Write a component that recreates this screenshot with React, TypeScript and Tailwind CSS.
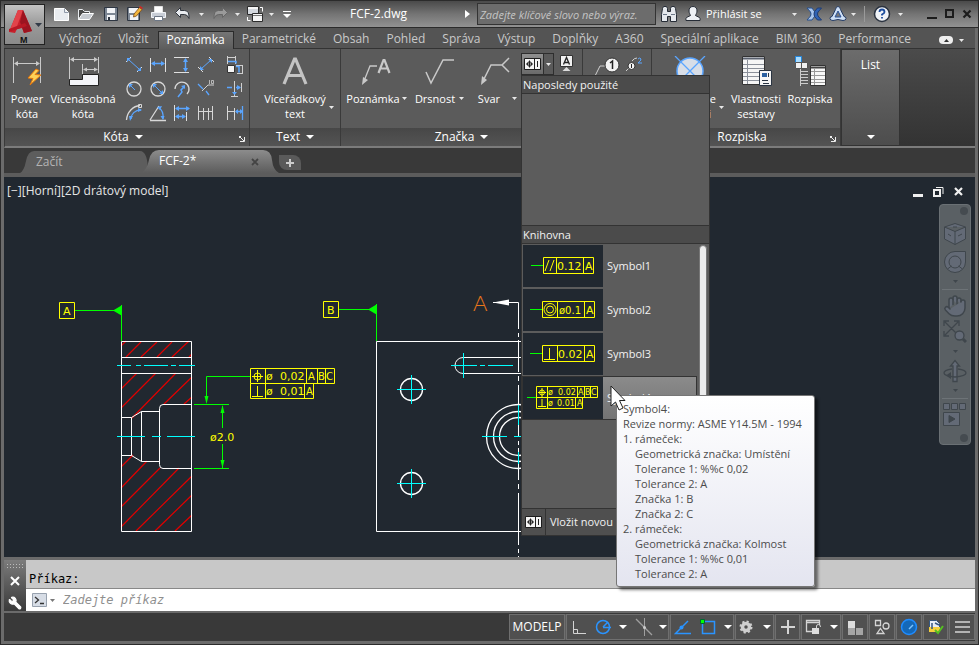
import type { ReactNode } from "react";
import { Hand, Wrench } from "lucide-react";

const tabs = [
  "Výchozí",
  "Vložit",
  "Poznámka",
  "Parametrické",
  "Obsah",
  "Pohled",
  "Správa",
  "Výstup",
  "Doplňky",
  "A360",
  "Speciální aplikace",
  "BIM 360",
  "Performance",
];

const tooltipLines = [
  { text: "Symbol4:", indent: false },
  { text: "Revize normy: ASME Y14.5M - 1994", indent: false },
  { text: "1. rámeček:", indent: false },
  { text: "Geometrická značka: Umístění", indent: true },
  { text: "Tolerance 1: %%c 0,02", indent: true },
  { text: "Tolerance 2: A", indent: true },
  { text: "Značka 1: B", indent: true },
  { text: "Značka 2: C", indent: true },
  { text: "2. rámeček:", indent: false },
  { text: "Geometrická značka: Kolmost", indent: true },
  { text: "Tolerance 1: %%c 0,01", indent: true },
  { text: "Tolerance 2: A", indent: true },
];

type IconProps = { w?: number; h?: number; children: ReactNode };

function Icon({ w = 18, h = 18, children }: IconProps) {
  return (
    <svg
      width={w}
      height={h}
      viewBox={`0 0 ${w} ${h}`}
      fill="none"
      stroke="#d4d4d4"
      className="block flex-none"
      aria-hidden="true"
    >
      {children}
    </svg>
  );
}

function Caret({ big }: { big?: boolean }) {
  return big ? (
    <svg width="8" height="4" viewBox="0 0 8 4" className="block flex-none" aria-hidden="true">
      <path d="M0 0h8L4 4z" fill="#fff" />
    </svg>
  ) : (
    <svg width="5" height="3" viewBox="0 0 5 3" className="block flex-none" aria-hidden="true">
      <path d="M0 0h5L2.5 3z" fill="#e8e8e8" />
    </svg>
  );
}

/* ---------- title bar ---------- */

function Logo() {
  return (
    <button
      aria-label="Nabídka aplikace"
      className="absolute left-[3px] top-[3px] z-10 h-[41px] w-[41px] border border-[#222] bg-linear-to-b from-[#c4c4c4] via-[#9a9a9a] to-[#8a8a8a]"
    >
      <svg width="39" height="39" viewBox="0 0 39 39" aria-hidden="true">
        <path d="M13 5h5l9 21-8 2-2-5-5 1-2 4-6-1z" fill="#c8202c" />
        <path d="M13 5h5l-7 19-7 3z" fill="#e2434a" />
        <path d="M18 5l9 21-8 2-4-11z" fill="#9c1420" />
        <path d="M4 24l16-6 2 3-18 6z" fill="#b81824" />
        <path d="M30 18h7l-3.500 4z" fill="#333b48" />
        <text x="15" y="38" fontSize="9" fontWeight="700" fontFamily="Liberation Sans" fill="#111">
          M
        </text>
      </svg>
    </button>
  );
}

function QuickAccess() {
  return (
    <div className="flex items-center">
      <button aria-label="Nový" className="w-6">
        <Icon>
          <path d="M1.500 3.500h10l4 4v8h-14z" fill="#e9ecf0" stroke="#fff" />
          <path d="M11.500 3.500v4h4" stroke="#8f99a8" />
        </Icon>
      </button>
      <button aria-label="Otevřít" className="w-[25px]">
        <Icon>
          <path d="M1.500 14.500v-10h4l2 2h5v3" fill="#4a4a4a" stroke="#e9ecf0" />
          <path d="M1.500 14.500l4-6h11l-4 6z" fill="#c7cbd1" stroke="#fff" />
        </Icon>
      </button>
      <button aria-label="Uložit" className="w-[23px]">
        <Icon>
          <path d="M2.500 2.500h13v13h-13z" fill="#7d8794" stroke="#2e3642" />
          <path d="M5 3h8v5H5zM5 10h8v5H5z" fill="#f2f4f7" stroke="none" />
          <path d="M6 12h2v3H6z" fill="#2e3642" stroke="none" />
        </Icon>
      </button>
      <button aria-label="Uložit jako" className="w-[25px]">
        <Icon>
          <path d="M2.500 2.500h12v13h-12z" fill="#7d8794" stroke="#2e3642" />
          <path d="M4 3h9v5H4zM5 10h8v5H5z" fill="#f2f4f7" stroke="none" />
          <path d="M9 9l5.500-6.500 2.500 2L11.500 11l-3 1z" fill="#f3b63c" stroke="#7a4a18" strokeWidth=".8" />
          <path d="M14 2l1-1 3 2-1 1z" fill="#d22" stroke="none" />
        </Icon>
      </button>
      <button aria-label="Tisk" className="w-6">
        <Icon>
          <path d="M4.500 7V1.500h8V7" fill="#fff" stroke="#e0e0e0" />
          <path d="M1.500 7.500h14v5h-14z" fill="#c9ced6" stroke="#f2f4f7" />
          <path d="M4.500 11.500h8v4h-8z" fill="#fff" stroke="#6c7685" />
        </Icon>
      </button>
      <button aria-label="Zpět" className="w-[18px]">
        <Icon>
          <path d="M1.500 7.500l5-5v3h4q5 0 4.500 8-1.500-4-4.500-4h-4v3z" fill="#e9ecf0" stroke="#30363f" />
        </Icon>
      </button>
      <button aria-label="Historie zpět" className="flex w-[19px] justify-center">
        <Caret />
      </button>
      <button aria-label="Znovu" className="w-[18px]">
        <Icon>
          <path d="M16.500 7.500l-5-5v3h-4q-5 0-4.500 8 1.500-4 4.500-4h4v3z" fill="#9a9a9a" stroke="#666" />
        </Icon>
      </button>
      <button aria-label="Historie znovu" className="flex w-[17px] justify-center">
        <Caret />
      </button>
      <button aria-label="Pracovní prostory" className="w-[18px]">
        <Icon>
          <path d="M1.500 1.500h11v8h-11z" fill="#d4d8de" stroke="#2c2c2c" />
          <path d="M2 2h10v2H2z" fill="#f5f5f5" stroke="none" />
          <path d="M6.500 8.500h10v8h-10z" fill="#f5f5f5" stroke="#2c2c2c" />
          <path d="M7 10.500h9" stroke="#777" />
          <path d="M14 2.500h2.500v4M1.500 12v3.500h3" stroke="#fff" />
        </Icon>
      </button>
      <button aria-label="Vybrat prostor" className="flex w-[15px] justify-center">
        <Caret />
      </button>
      <button aria-label="Přizpůsobit panel" className="flex w-4 flex-col items-center gap-0.5">
        <span className="h-px w-2 bg-white" />
        <Caret big />
      </button>
    </div>
  );
}

function TitleBar() {
  return (
    <header className="flex h-[27px] items-center border-b border-[#2b2b2b] bg-linear-to-b from-[#4a4a4a] via-[#747474] to-[#929292] pl-[52px] pr-1.5">
      <QuickAccess />
      <h1 className="ml-[55px] w-[115px] flex-none text-xs leading-4 text-white">FCF-2.dwg</h1>
      <svg width="5" height="8" viewBox="0 0 5 8" className="mr-[7px] flex-none" aria-hidden="true">
        <path d="M0 0l5 4-5 4z" fill="#fff" />
      </svg>
      <input
        aria-label="Hledat"
        placeholder="Zadejte klíčové slovo nebo výraz."
        className="h-[22px] min-w-0 flex-1 border border-[#333] bg-[#6c6c6c] px-0.5 text-[11px] italic placeholder:text-[#c4c4c4]"
      />
      <button aria-label="Hledat" className="ml-1 w-6">
        <Icon>
          <path
            d="M2.500 3.500l1-2h3l1 2v3h3v-3l1-2h3l1 2 1 6v7h-6v-5h-3v5h-6v-7z"
            fill="#e6e9ee"
            stroke="#262c36"
          />
          <path d="M3 9.500h4M11 9.500h4" stroke="#6b7686" />
        </Icon>
      </button>
      <button className="flex items-center gap-1 text-[11px] leading-4 text-white">
        <Icon>
          <path
            d="M9 1.500c3 0 4 2 4 4.500 0 2-1 3-1.500 4.500l4 2q1 1 .5 3H2q-.5-2 .5-3l4-2C6 9 5 8 5 6c0-2.500 1-4.500 4-4.500z"
            fill="#eef1f5"
            stroke="#262c36"
          />
        </Icon>
        <span className="w-[82px] text-left">Přihlásit se</span>
        <Caret />
      </button>
      <button aria-label="Exchange" className="ml-2 w-6">
        <Icon>
          <path d="M2 3h5l2.500 3.500q1 2.500 0 5L7 15H2l3.500-4q1-2 0-4z" fill="#a9c6ee" stroke="#27508f" />
          <path d="M16.500 3h-4L9.500 6.500q-1 2.500 0 5l3 3.500h4L13 11q-1-2 0-4z" fill="#2f62b4" stroke="#1f3c74" />
        </Icon>
      </button>
      <button aria-label="A360" className="flex items-center gap-1">
        <Icon>
          <path
            d="M9 1.500q2 0 2.500 3l3.500 7q2 0 2 2t-3 2l-5-1-5 1q-3 0-3-2t2-2l3.500-7q.5-3 2.500-3z"
            fill="#cfe0f6"
            stroke="#233a63"
          />
          <path d="M9 6l3 6H6z" fill="#777" stroke="#2a5298" />
        </Icon>
        <Caret />
      </button>
      <span className="ml-2 h-4 w-px bg-[#9a9a9a]" />
      <button aria-label="Nápověda" className="ml-2 flex items-center gap-[7px]">
        <Icon>
          <circle cx="9" cy="9" r="7.500" fill="#f0f3f8" stroke="#2b3340" strokeWidth="1.500" />
          <path d="M6.500 7q0-2.500 2.500-2.500T11.500 7q0 1.200-2.500 2.500v1M9 12v1.500" stroke="#1d4d9e" strokeWidth="1.800" />
        </Icon>
        <Caret />
      </button>
      <div className="ml-6 flex gap-2 text-[#1c1c1c]">
        <button aria-label="Minimalizovat" className="flex h-2.5 w-2.5 items-end">
          <span className="h-[2px] w-full bg-current" />
        </button>
        <button aria-label="Maximalizovat" className="h-[9px] w-[9px] border-2 border-current" />
        <button aria-label="Zavřít">
          <svg width="10" height="10" viewBox="0 0 10 10" aria-hidden="true">
            <path d="M1.500 1.500l7 7M8.500 1.500l-7 7" stroke="currentColor" strokeWidth="2.200" />
          </svg>
        </button>
      </div>
    </header>
  );
}

function RibbonTabs() {
  return (
    <nav className="flex h-[21px] items-end border-b border-[#333] bg-[#545454] pl-[47px]">
      {tabs.map((tab) => (
        <a
          key={tab}
          href="#"
          className={
            tab === "Poznámka"
              ? "-mb-px h-[18px] flex-none border border-b-0 border-[#2b2b2b] bg-linear-to-b from-[#757575] to-[#5d5d5d] px-2 text-xs leading-4 text-white"
              : "h-[17px] flex-none pl-2 pr-[9px] text-xs leading-4 text-[#c9c9c9]"
          }
        >
          {tab}
        </a>
      ))}
      <button aria-label="Minimalizovat pás karet" className="mb-1 ml-auto mr-[11px] flex items-center gap-1.5">
        <span className="flex h-2 w-[14px] items-center justify-center rounded-sm bg-[#eee]">
          <svg width="5" height="3" viewBox="0 0 5 3" aria-hidden="true">
            <path d="M0 3h5L2.500 0z" fill="#333" />
          </svg>
        </span>
        <Caret />
      </button>
    </nav>
  );
}

/* ---------- ribbon ---------- */

const blue = "#5aa5ff";

function PowerDimIcon() {
  return (
    <Icon w={32} h={32}>
      <path d="M2.500 1v26M29.500 1v26M4 7.500h24" stroke="#c9c9c9" />
      <path d="M3 7.500l4-2.500v5zM29 7.500L25 5v5z" fill="#c9c9c9" stroke="none" />
      <path d="M25 13l-8 9 5 .5-3 6.500 11-10-6-.5 4-4z" fill="#ffd257" stroke="#e8790b" />
    </Icon>
  );
}

function MultiDimIcon() {
  return (
    <Icon w={32} h={32}>
      <path d="M2.500 1v22M31.500 1v16M4 3.500h26M15.500 8v10M17 13.500h13" stroke="#c9c9c9" />
      <path d="M3 3.500L7 1v5zM31 3.500L27 1v5zM16 13.500l4-2v4zM31 13.500l-4-2v4z" fill="#c9c9c9" stroke="none" />
      <path d="M2.500 29.500v-6h13v-5h16v11z" fill="#f3f4f8" stroke="#222" />
    </Icon>
  );
}

const smallDims: ReactNode[] = [
  <>
    <path d="M1 6l5-5M12 16l5-5" stroke="#e0e0e0" />
    <path d="M4 4l10 9" stroke={blue} />
    <path d="M2 2h4L2 6zM16 15h-4l4-4z" fill={blue} stroke="none" />
  </>,
  <>
    <path d="M1.500 2v14M16.500 2v14" stroke="#e0e0e0" />
    <path d="M3 7.500h12" stroke={blue} strokeWidth="1.500" />
    <path d="M2 7.500L6 5v5zM16 7.500L12 5v5z" fill={blue} stroke="none" />
  </>,
  <>
    <path d="M1 1.500h15M1 16.500h15" stroke="#e0e0e0" />
    <path d="M12.500 3v12" stroke={blue} strokeWidth="1.500" />
    <path d="M12.500 2L10 6h5zM12.500 16L10 12h5z" fill={blue} stroke="none" />
  </>,
  <>
    <path d="M12 1l5 5M1 11l5 5" stroke="#e0e0e0" />
    <path d="M4 13L14 4" stroke={blue} />
    <path d="M15 3v4l-4-4zM3 14v-4l4 4z" fill={blue} stroke="none" />
  </>,
  <>
    <path d="M1.500 0v8M9.500 0v8M1 1.500h9M10 9.500h7M11 17.500h6M16.500 9v9" stroke="#d0d0d0" />
    <path d="M2 5.500h8v2M10 10.500h3v6" stroke={blue} strokeWidth="1.500" />
    <path d="M1.500 9.500h7v7h-7z" fill="#f5f5f5" stroke="#333" />
  </>,
  <>
    <circle cx="9" cy="9" r="7" stroke="#d8d8d8" strokeWidth="1.300" />
    <path d="M5 5l5 5" stroke={blue} />
    <path d="M4 4h4L4 8z" fill={blue} stroke="none" />
  </>,
  <>
    <circle cx="9" cy="9" r="7" stroke="#d8d8d8" strokeWidth="1.300" />
    <path d="M5 5l8 8" stroke={blue} />
    <path d="M4 4h4L4 8zM14 14h-4l4-4z" fill={blue} stroke="none" />
  </>,
  <>
    <path d="M2 9a7 7 0 1 1 12 5" stroke="#d8d8d8" strokeWidth="1.300" />
    <path d="M5 17l4-5-1-2 3-3" stroke={blue} strokeWidth="1.500" />
    <path d="M12 5v4L8 6z" fill={blue} stroke="none" />
  </>,
  <>
    <path d="M1 4l5 5M12 15l-3-4" stroke={blue} strokeWidth="1.300" />
    <path d="M5 11l6-6h6" stroke="#d0d0d0" />
    <path d="M12.500 0v4M14.500.5h2v3h-2z" stroke="#d0d0d0" strokeWidth=".8" />
  </>,
  <>
    <path d="M8.500 1v15M5 16.500h7M15.500 3v9" stroke="#d0d0d0" />
    <path d="M1 7.500h5M10 7.500h4" stroke={blue} strokeWidth="1.300" />
    <path d="M15 7.500L11 5v5zM8.500 15L6 12h5z" fill={blue} stroke="none" />
  </>,
  <>
    <path d="M1.500 16C2 8 8 2 15 1.500" stroke="#d8d8d8" strokeWidth="1.300" />
    <path d="M6 15c0-5 4-9 10-9" stroke={blue} strokeWidth="1.300" />
    <path d="M5 17l-1-5h4zM17 6l-4-2v4z" fill={blue} stroke="none" />
    <path d="M13.500.5h3v3h-3z" stroke="#d8d8d8" />
  </>,
  <>
    <path d="M1 16.500h16M1 16L10 2" stroke="#d8d8d8" strokeWidth="1.300" />
    <path d="M10 4q5 3 4 11" stroke={blue} strokeWidth="1.300" />
    <path d="M8 3l5-1-2 4zM14 16l-2.500-4h4z" fill={blue} stroke="none" />
  </>,
  <>
    <path d="M1.500 1v16M13.500 8v9" stroke="#e0e0e0" />
    <path d="M3 4.500h13M3 12.500h9" stroke={blue} strokeWidth="1.500" />
    <path d="M2 4.500L6 2v5zM17 4.500L13 2v5zM2 12.500L6 10v5zM13 12.500L9 10v5z" fill={blue} stroke="none" />
  </>,
  <path d="M1.500 2v14M6.500 4v12M11.500 4v12M15.500 2v14M2 7.500h14" stroke="#d8d8d8" />,
  <>
    <path d="M1.500 2v14M8.500 4v12M2 7.500h7" stroke="#d8d8d8" />
    <path d="M10 7.500h6M16.500 2v14" stroke={blue} strokeWidth="1.300" />
    <path d="M9 7.500L12 5v5zM17 7.500L14 5v5z" fill={blue} stroke="none" />
  </>,
];

function BigButton({ icon, children, wide }: { icon: ReactNode; children: ReactNode; wide?: boolean }) {
  return (
    <button
      className={
        wide
          ? "flex w-[68px] flex-none flex-col items-center gap-[3px] whitespace-nowrap"
          : "flex w-11 flex-none flex-col items-center gap-[3px] whitespace-nowrap"
      }
    >
      {icon}
      <span className="text-center text-[11px] leading-[15px] text-white">{children}</span>
    </button>
  );
}

function PanelTitle({ children, launcher }: { children: ReactNode; launcher?: boolean }) {
  return (
    <div
      className={
        launcher
          ? "relative flex h-[18px] items-center justify-center gap-1.5 bg-linear-to-b from-[#474747] to-[#545454] pr-2 text-xs leading-4 text-white"
          : "flex h-[18px] items-center justify-center gap-1.5 bg-linear-to-b from-[#474747] to-[#545454] text-xs leading-4 text-white"
      }
    >
      {children}
      {launcher && (
        <button aria-label="Nastavení panelu" className="absolute bottom-1 right-1">
          <svg width="6" height="6" viewBox="0 0 6 6" aria-hidden="true">
            <path d="M0 .5h2M.5 0v2M1 1l4 4M5.500 1v4.500H1" stroke="#eee" fill="none" />
          </svg>
        </button>
      )}
    </div>
  );
}

function Frame() {
  return (
    <Icon w={17} h={12}>
      <path d="M.5.5h16v11H.5z" fill="#f5f5f5" stroke="#1d1d1d" />
      <path d="M10.500 1v10M13.500 3v6" stroke="#222" />
      <path d="M2 6h7M5.500 2.500v7" stroke="#222" />
      <circle cx="5.500" cy="6" r="2.200" stroke="#222" />
    </Icon>
  );
}

function Thumb({ kind }: { kind: number }) {
  return (
    <svg
      width="80"
      height="42"
      viewBox="0 0 80 42"
      fill="none"
      stroke="#ff0"
      fontFamily="DejaVu Sans"
      fontSize="11"
      className="block flex-none bg-[#212830]"
      aria-hidden="true"
    >
      {kind === 1 && (
        <>
          <path d="M8 20.500h12" stroke="#0f0" />
          <path d="M20.500 12.500h50v16h-50zM33.500 12v16M60.500 12v16M22 26l4-11M27 26l4-11" />
          <text x="34" y="25" fill="#ff0" stroke="none">0.12</text>
          <text x="62" y="25" fill="#ff0" stroke="none">A</text>
        </>
      )}
      {kind === 2 && (
        <>
          <path d="M7 20.500h12" stroke="#0f0" />
          <path d="M19.500 12.500h52v16h-52zM34.500 12v16M61.500 12v16" />
          <circle cx="27" cy="20.500" r="6" />
          <circle cx="27" cy="20.500" r="3.500" />
          <text x="36" y="25" fill="#ff0" stroke="none" fontSize="10">ø0.1</text>
          <text x="63" y="25" fill="#ff0" stroke="none">A</text>
        </>
      )}
      {kind === 3 && (
        <>
          <path d="M7 20.500h12" stroke="#0f0" />
          <path d="M19.500 12.500h52v16h-52zM34.500 12v16M61.500 12v16M21 26.500h11M26.500 15v11" />
          <text x="35" y="25" fill="#ff0" stroke="none">0.02</text>
          <text x="63" y="25" fill="#ff0" stroke="none">A</text>
        </>
      )}
      {kind === 4 && (
        <>
          <path d="M4 20.500h10" stroke="#0f0" />
          <path d="M13.500 9.500h61v11h-61zM13.500 20.500v11h46v-11M24.500 9v22M54.500 9v11M61.500 9v11M67.500 9v11M52.500 20v11M15 29.500h8M19 22v7M15 15.500h8M19 11v9" />
          <circle cx="19" cy="15.500" r="2.500" />
          <g fill="#ff0" stroke="none" fontSize="8">
            <text x="25" y="18">ø</text>
            <text x="35" y="18">0.02</text>
            <text x="55" y="18">A</text>
            <text x="62" y="18">B</text>
            <text x="68" y="18">C</text>
            <text x="25" y="29">ø</text>
            <text x="34" y="29">0.01</text>
            <text x="54" y="29">A</text>
          </g>
        </>
      )}
    </svg>
  );
}

function SymbolTooltip() {
  return (
    <div
      role="tooltip"
      className="absolute left-[93px] top-[18px] z-30 w-[199px] rounded-[3px] border border-[#767676] bg-linear-to-b from-white to-[#e4e5f0] px-1.5 py-[5px] shadow-[3px_3px_3px_rgba(0,0,0,0.5)]"
    >
      {tooltipLines.map((line, i) => (
        <p
          key={i}
          className={
            line.indent
              ? "whitespace-nowrap pl-3 text-[11px] leading-[15px] text-[#4c4c4c]"
              : "whitespace-nowrap text-[11px] leading-[15px] text-[#4c4c4c]"
          }
        >
          {line.text}
        </p>
      ))}
    </div>
  );
}

function SymbolMenu() {
  return (
    <div className="absolute left-0 top-full z-20 w-[189px] border border-[#333] bg-[#5c5c5c] text-[#f2f2f2]">
      <h2 className="h-[18px] border-b border-[#333] bg-[#4b4b4b] pl-px text-[11px] leading-[17px]">
        Naposledy použité
      </h2>
      <div className="h-[131px]" />
      <h2 className="h-[19px] border-y border-[#333] bg-[#4b4b4b] pl-px text-[11px] leading-[17px]">
        Knihovna
      </h2>
      <div className="flex h-[264px] pr-px pt-px">
        <ul className="flex-1 pl-px">
          {[1, 2, 3, 4].map((n) => (
            <li key={n} className="relative h-11 pr-[3px]">
              <button
                className={
                  n === 4
                    ? "flex h-[42px] w-full items-center bg-linear-to-b from-[#8b8b8b] to-[#747474] text-[11px] leading-4 outline outline-[#333]"
                    : "flex h-[42px] w-full items-center text-[11px] leading-4"
                }
              >
                <Thumb kind={n} />
                <span className="pl-1">Symbol{n}</span>
              </button>
              {n === 4 && (
                <>
                  <SymbolTooltip />
                  <svg
                    width="16"
                    height="26"
                    viewBox="0 0 16 26"
                    className="absolute left-[87px] top-2 z-40"
                    aria-hidden="true"
                  >
                    <path d="M1 1v20l4.500-4 3.500 8 4-2-3.500-7.500H15z" fill="#fff" stroke="#222" />
                  </svg>
                </>
              )}
            </li>
          ))}
        </ul>
        <div className="mr-px w-2 rounded-full border border-[#777] bg-[#ececec]" />
      </div>
      <button className="flex h-[27px] w-full items-center border-t border-[#333] bg-[#4f4f4f] text-[11px] leading-4">
        <span className="flex h-full w-6 items-center justify-center border-r border-[#333]">
          <Frame />
        </span>
        <span className="pl-1">Vložit novou</span>
      </button>
    </div>
  );
}

function Ribbon() {
  return (
    <section className="flex h-[99px] border-b-2 border-l border-b-[#7c7c7c] border-l-[#3a3a3a] bg-linear-to-b from-[#4b4b4b] to-[#333]">
      <div className="flex w-[245px] flex-none flex-col border-r border-[#3a3a3a] bg-[#5b5b5b]">
        <div className="flex flex-1 pt-[7px]">
          <BigButton icon={<PowerDimIcon />}>
            Power
            <br />
            kóta
          </BigButton>
          <BigButton wide icon={<MultiDimIcon />}>
            Vícenásobná
            <br />
            kóta
          </BigButton>
          <div className="ml-[5px] grid auto-rows-[24px] grid-cols-[24px_24px_24px_24px_29px] items-start">
            {smallDims.map((d, i) => (
              <button key={i} aria-label={`Kóta ${i + 1}`} className="flex justify-end pr-[3px]">
                <Icon>{d}</Icon>
              </button>
            ))}
          </div>
        </div>
        <PanelTitle launcher>
          Kóta <Caret big />
        </PanelTitle>
      </div>

      <div className="flex w-[91px] flex-none flex-col border-r border-[#3a3a3a] bg-[#5b5b5b]">
        <div className="flex flex-1 justify-center pt-[7px]">
          <button className="relative flex flex-col items-center gap-[3px] text-white">
            <Icon w={32} h={32}>
              <path d="M5 28L15.500 3h1L27 28M9 19.500h14" stroke="#c4c4c4" strokeWidth="3.200" />
            </Icon>
            <span className="text-center text-[11px] leading-[15px]">
              Víceřádkový
              <br />
              text
            </span>
            <span className="absolute -right-2 top-[50px]">
              <Caret />
            </span>
          </button>
        </div>
        <PanelTitle>
          Text <Caret big />
        </PanelTitle>
      </div>

      <div className="flex w-[242px] flex-none flex-col border-r border-[#3a3a3a] bg-[#5b5b5b]">
        <div className="flex flex-1 items-start">
          <button className="mt-[7px] flex w-[71px] flex-col items-center gap-[3px] text-[11px] leading-[15px] text-white">
            <Icon w={32} h={32}>
              <path d="M3 25l6-15h7" stroke="#c9c9c9" strokeWidth="1.300" />
              <path d="M1 29l1-8 5 3z" fill="#c9c9c9" stroke="none" />
              <path d="M17.500 17L22.500 4h1l5 13M19.500 12.500h7" stroke="#c9c9c9" strokeWidth="2.200" />
            </Icon>
            <span className="flex items-center gap-0.5">
              Poznámka <Caret />
            </span>
          </button>
          <button className="mt-[7px] flex w-[55px] flex-col items-center gap-[3px] text-[11px] leading-[15px] text-white">
            <Icon w={32} h={32}>
              <path d="M2 16l5 11L19 4h11" stroke="#c9c9c9" strokeWidth="1.500" />
            </Icon>
            <span className="flex items-center gap-1">
              Drsnost <Caret />
            </span>
          </button>
          <button className="mt-[7px] flex w-[54px] flex-col items-end gap-[3px] pr-1 text-[11px] leading-[15px] text-white">
            <span className="mr-1.5">
              <Icon w={32} h={32}>
                <path d="M4 25L12 9h11l7-7M23 9l7 7" stroke="#c9c9c9" strokeWidth="1.500" />
                <path d="M2 29l1-9 5 4z" fill="#c9c9c9" stroke="none" />
              </Icon>
            </span>
            <span className="flex items-center gap-3">
              Svar <Caret />
            </span>
          </button>
          <div className="relative mt-1 h-[22px] w-[33px]">
            <button
              aria-label="Tolerance"
              className="flex h-full w-full items-center border border-[#2e2e2e] bg-linear-to-b from-[#909090] to-[#6a6a6a] pl-0.5"
            >
              <Frame />
              <span className="ml-0.5 flex h-full flex-1 items-center justify-center border-l border-[#2e2e2e] bg-[#5a5a5a]">
                <Caret />
              </span>
            </button>
            <SymbolMenu />
          </div>
          <button aria-label="Základna" className="ml-[3px] mt-1.5">
            <Icon>
              <path d="M3.500.5h12v11h-12z" fill="#f1f1f1" stroke="#333" />
              <path d="M6.500 9.500l3-7 3 7M7.500 7.500h4" stroke="#222" strokeWidth="1.300" />
              <path d="M9.500 12l4 4h-8z" fill="#ddd" stroke="none" />
            </Icon>
          </button>
        </div>
        <PanelTitle>
          Značka <Caret big />
        </PanelTitle>
      </div>

      <div className="flex w-[69px] flex-none flex-col border-r border-[#3a3a3a] bg-[#5b5b5b]">
        <div className="flex flex-1 items-start gap-1 pl-[11px] pt-[7px]">
          <Icon w={27} h={22}>
            <path d="M1 20l5-10h6" stroke="#d0d0d0" />
            <circle cx="18" cy="9" r="7" fill="#f2f2f2" stroke="#333" />
            <path d="M16 7l2.500-2v8" stroke="#222" strokeWidth="1.500" />
          </Icon>
          <Icon w={20} h={18}>
            <path d="M1 15l5-5M7 5q2-3 5-3" stroke="#d0d0d0" />
            <circle cx="6.500" cy="10" r="3.500" fill="#f2f2f2" stroke="#333" />
            <path d="M6.500 8v4" stroke="#222" />
            <path d="M13 3q2-2 3 0 0 2-3 4h4" stroke={blue} />
          </Icon>
        </div>
        <PanelTitle>Pozice</PanelTitle>
      </div>

      <div className="flex w-[189px] flex-none flex-col border-r border-[#3a3a3a] bg-[#5b5b5b]">
        <div className="flex flex-1 justify-end pr-[3px] pt-[7px]">
          <button className="relative mr-[13px] flex flex-col items-center gap-[3px] text-[11px] leading-[15px] text-white">
            <Icon w={32} h={32}>
              <circle cx="16" cy="15" r="13" fill="#d8dee8" stroke={blue} strokeWidth="1.500" />
              <path d="M1 0l30 30M31 0L1 30" stroke={blue} strokeWidth="1.300" />
            </Icon>
            <span className="text-center">
              Reference
              <br />
              součásti
            </span>
            <span className="absolute -right-2 top-[50px]">
              <Caret />
            </span>
          </button>
          <button className="flex w-[54px] flex-col items-center gap-[3px] text-[11px] leading-[15px] text-white">
            <Icon w={32} h={32}>
              <path d="M2.500.5h22v28h-22z" fill="#f5f5f5" stroke="#333" />
              <path d="M3 2.500h21" stroke="#5b6270" strokeWidth="2" />
              <path d="M3 8.500h21M3 12.500h21M3 16.500h21M3 20.500h21M3 24.500h21M7.500 4v24" stroke="#8b909a" />
              <path d="M19.500 14.500h12v15h-12z" fill="#f5f5f5" stroke="#2a3442" />
              <path d="M22 17h5v4h-5z" fill="#2a5fa0" stroke="none" />
              <path d="M28.500 17v4M22 24.500h6M23 27.500h6" stroke="#2a3442" />
            </Icon>
            <span className="text-center">
              Vlastnosti
              <br />
              sestavy
            </span>
          </button>
          <button className="flex w-[54px] flex-col items-center gap-[3px] text-[11px] leading-[15px] text-white">
            <Icon w={32} h={32}>
              <path d="M1.500.5h6v6h-6z" fill="#a9dcff" stroke="#2587dc" />
              <path d="M1.500 6.500h6v6h-6zM7.500 6.500h6v6h-6z" fill="#f1f1f1" stroke="#555" />
              <path d="M6.500 13v17M7 15.500h7M7 18.500h7M7 21.500h7M7 24.500h7M7 27.500h7" stroke="#ccc" />
              <path d="M16.500 9.500h15v20h-15z" fill="#f8f8f8" stroke="#333" />
              <path d="M17 11.500h14" stroke="#444" strokeWidth="2" />
              <path d="M17 15.500h14M17 19.500h14M17 23.500h14M17 26.500h14M20.500 13v16" stroke="#999" />
            </Icon>
            <span>Rozpiska</span>
          </button>
        </div>
        <PanelTitle launcher>Rozpiska</PanelTitle>
      </div>

      <button className="flex w-[59px] flex-none flex-col items-center justify-between border border-[#333] bg-linear-to-b from-[#6c6c6c] to-[#4d4d4d] pb-[6px] pt-[7px] text-xs leading-4 text-white">
        List
        <Caret big />
      </button>
    </section>
  );
}

/* ---------- document area ---------- */

function DocTabs() {
  return (
    <nav className="flex h-[29px] items-end border-b-4 border-[#5c5c5c] bg-[#393939] pl-4">
      <a href="#" className="relative h-[22px] w-32 flex-none pl-4 text-xs leading-[21px] text-[#b4b4b4]">
        <svg viewBox="0 0 128 22" className="absolute inset-0 h-full w-full" preserveAspectRatio="none" aria-hidden="true">
          <path d="M0 22Q4 20 6 10T14 0h106q8 0 8 22z" fill="#5d5d5d" />
        </svg>
        <span className="relative">Začít</span>
      </a>
      <a href="#" className="relative -ml-[7px] h-[23px] w-[138px] flex-none pl-[18px] text-xs leading-[22px] text-white">
        <svg viewBox="0 0 138 23" className="absolute inset-0 h-full w-full" preserveAspectRatio="none" aria-hidden="true">
          <defs>
            <linearGradient id="tab" x1="0" y1="0" x2="0" y2="1">
              <stop offset="0" stopColor="#8c8c8c" />
              <stop offset="1" stopColor="#5c5c5c" />
            </linearGradient>
          </defs>
          <path d="M0 23Q6 20 8 10T18 0h104q8 0 9 10 1 10 7 13z" fill="url(#tab)" />
        </svg>
        <span className="relative">FCF-2*</span>
        <svg width="8" height="8" viewBox="0 0 8 8" className="absolute right-5 top-2" aria-hidden="true">
          <path d="M1 1l6 6M7 1L1 7" stroke="#444" strokeWidth="1.800" />
        </svg>
      </a>
      <button
        aria-label="Nový výkres"
        className="mb-[3px] flex h-[15px] w-[22px] items-center justify-center rounded-bl-lg rounded-tr-lg bg-[#5a5a5a]"
      >
        <svg width="8" height="8" viewBox="0 0 8 8" aria-hidden="true">
          <path d="M4 0v8M0 4h8" stroke="#ccc" strokeWidth="2" />
        </svg>
      </button>
    </nav>
  );
}

const hatch =
  "M121 346l5-5M126 357l15-15M141 357l16-15M157 357l15-15M172 357l17-16M189 357l3-3" +
  "M121 389l16-16M121 408l35-35M132 418l44-45M164 404l28-27M184 404l8-7" +
  "M121 467l12-12M121 488l26-27M121 507l39-39M121 527l58-59M136 531l56-55M155 531l37-36M175 531l17-16";

function Drawing() {
  return (
    <svg
      className="absolute inset-0 h-full w-full"
      fill="none"
      fontFamily="DejaVu Sans"
      fontSize="11"
      role="img"
      aria-label="Výkres FCF-2"
    >
      <g transform="translate(-4 -177)">
        {/* section view */}
        <path d={hatch} stroke="#e00000" strokeWidth="1.200" />
        <path
          d="M121.500 341.500h70v190h-70zM121 357.500h70M121 373.500h70M121 417.500h10.500v38H121M131.500 417.500l10-6v50l-10-6M141.500 411.500h18M141.500 461.500h18M191 404.500h-28q-3.500 0-3.500 4v56q0 4 3.500 4h28"
          stroke="#fff"
        />
        <path
          d="M117 365.500h14M136 365.500h5M144 365.500h24M171 365.500h5M179 365.500h16M117 436.500h28M152 436.500h9M167 436.500h28"
          stroke="#0ff"
        />

        {/* plan view */}
        <path d="M540 341.500H376.500v190H540M540 357.500h-77a8 8 0 0 0 0 16h77" stroke="#fff" />
        <g stroke="#fff" strokeWidth="1.300">
          <circle cx="411.500" cy="389.500" r="11" />
          <circle cx="411.500" cy="483.500" r="11" />
          <circle cx="518.500" cy="436.500" r="32" />
          <circle cx="518.500" cy="436.500" r="25" />
          <circle cx="518.500" cy="436.500" r="19" />
        </g>
        <path d="M493 302.500h25.500V557" stroke="#fff" strokeDasharray="52 4 4 3 32 4 5 4" />
        <path
          d="M397 389.500h29M411.500 375v29M397 483.500h29M411.500 469v29M463.500 353v25M451 365.500h26M480 365.500h5M488 365.500h25M482 436.500h25M514 436.500h10M518.500 405v20M518.500 452v12"
          stroke="#0ff"
        />
        <path d="M493 302.500l16-3v6z" fill="#fff" />
        <text x="473" y="311" fontFamily="Lato" fontWeight="300" fontSize="22" fill="#e8761a">
          A
        </text>

        {/* datums and dimensions */}
        <path
          d="M75 310.500h46M121.500 305v36M339 309.500h37M376.500 304v37M250 376.500h-43.500v20M194 404.500h35M194 468.500h35M222.500 406v22M222.500 444v24"
          stroke="#0f0"
        />
        <path
          d="M113 310.500l8.500-5v10zM368 309.500l8.500-5v10zM204.500 396h4l-2 8zM222.500 405l-2 8h4zM222.500 468l-2-8h4z"
          fill="#0f0"
        />
        <path
          d="M59.500 302.500h15v16h-15zM323.500 301.500h15v16h-15zM250.500 368.500h84v15h-84zM250.500 383.500v15h63v-15M265.500 368v30M306.500 368v15M317.500 368v15M325.500 368v15M304.500 383v15M252 376.500h11M257.500 370v12M252 396.500h11M257.500 386v10"
          stroke="#ff0"
        />
        <circle cx="257.500" cy="376.500" r="3.500" stroke="#ff0" />
        <g fill="#ff0">
          <text x="63" y="315">A</text>
          <text x="327" y="314">B</text>
          <text x="266" y="380">ø</text>
          <text x="280" y="380">0,02</text>
          <text x="308" y="380" fontSize="10">A</text>
          <text x="318" y="380" fontSize="10">B</text>
          <text x="326" y="380" fontSize="10">C</text>
          <text x="266" y="395">ø</text>
          <text x="280" y="395">0,01</text>
          <text x="306" y="395" fontSize="10">A</text>
          <text x="210" y="441">ø2.0</text>
        </g>
      </g>
    </svg>
  );
}

function NavCaret() {
  return (
    <svg width="5" height="3" viewBox="0 0 5 3" className="my-[6px] flex-none" aria-hidden="true">
      <path d="M0 0h5L2.500 3z" fill="currentColor" />
    </svg>
  );
}

function NavBar() {
  return (
    <aside
      aria-label="Navigační panel"
      className="absolute right-1 top-[27px] flex w-8 flex-col items-center rounded border border-[#6a7074] bg-[#5a6064] pb-[17px] pt-[17px] text-[#3f464c]"
    >
      <button aria-label="Zavřít panel" className="absolute right-0.5 top-0.5 h-2 w-2 rounded-full bg-[#454b50]" />
      <button aria-label="ViewCube">
        <svg width="24" height="24" viewBox="0 0 24 24" fill="#636a76" stroke="currentColor" aria-hidden="true">
          <path d="M1.500 5L12 1.500 22.500 5v12L12 22.500 1.500 17zM1.500 5L12 9.500 22.500 5M12 9.500v13M5 12l3 2M15 14l4-2M10 5h4" />
        </svg>
      </button>
      <button aria-label="SteeringWheels" className="mt-1">
        <svg width="24" height="24" viewBox="0 0 24 24" fill="#636a76" stroke="currentColor" aria-hidden="true">
          <path d="M12 1.500h10.500V12A10.500 10.500 0 1 1 12 1.500z" />
          <circle cx="12" cy="12" r="6" />
          <path d="M4.500 19l4-3M19.500 19l-4-3" />
        </svg>
      </button>
      <NavCaret />
      <span className="mb-1 h-px w-[26px] bg-[#6d7377]" />
      <button aria-label="Posun">
        <Hand size={24} fill="#636a76" strokeWidth={1.5} />
      </button>
      <button aria-label="Zoom" className="mt-0.5">
        <svg width="24" height="24" viewBox="0 0 24 24" fill="none" stroke="currentColor" strokeWidth="1.300" aria-hidden="true">
          <path d="M2 2l13 13M15 2L2 15M1 6V1h5M11 1h5v5M1 11v5h5" />
          <circle cx="16.500" cy="15.500" r="4.500" fill="#636a76" />
          <path d="M20 19l3 3" strokeWidth="3" />
        </svg>
      </button>
      <NavCaret />
      <button aria-label="Orbita">
        <svg width="24" height="24" viewBox="0 0 24 24" fill="none" stroke="currentColor" strokeWidth="1.300" aria-hidden="true">
          <path d="M10 22.500V7H7.500L12 1.500 16.500 7H14v15.500z" fill="#636a76" />
          <path d="M9 10Q1 11 1 14t11 4q11-1 11-4t-8-4" />
          <path d="M8 13v7l-5-3.500z" fill="currentColor" stroke="none" />
        </svg>
      </button>
      <NavCaret />
      <span className="mb-1 h-px w-[26px] bg-[#6d7377]" />
      <button aria-label="ShowMotion">
        <svg width="24" height="24" viewBox="0 0 24 24" fill="#636a76" stroke="currentColor" aria-hidden="true">
          <path d="M.5.500h6v6h-6zM8.500.500h6v6h-6zM16.500.500h6v6h-6zM.5 9.500h16v13H.5z" />
          <path d="M6 12.500l6 3.500-6 3.500z" fill="currentColor" />
        </svg>
      </button>
      <button aria-label="Nabídka panelu" className="absolute bottom-0.5 right-0.5 h-2 w-2 rounded-full bg-[#454b50]" />
    </aside>
  );
}

function Canvas() {
  return (
    <main className="relative min-h-0 flex-1 overflow-hidden bg-[#212830]">
      <Drawing />
      <p className="absolute left-[3px] top-1.5 text-xs leading-4 text-[#e6e6e6]">[−][Horní][2D drátový model]</p>
      <div className="absolute right-3 top-[9px] flex items-center gap-2.5">
        <button aria-label="Minimalizovat výkres" className="flex h-2.5 w-2.5 items-end">
          <span className="h-[3px] w-full bg-[#f0f0f0]" />
        </button>
        <button aria-label="Obnovit výkres">
          <svg width="11" height="11" viewBox="0 0 11 11" fill="none" stroke="#f0f0f0" aria-hidden="true">
            <path d="M1 4h6v6H1z" strokeWidth="2" />
            <path d="M3 1.500h7V8" />
          </svg>
        </button>
        <button aria-label="Zavřít výkres">
          <svg width="9" height="9" viewBox="0 0 9 9" aria-hidden="true">
            <path d="M1 1l7 7M8 1L1 8" stroke="#f0f0f0" strokeWidth="2.200" />
          </svg>
        </button>
      </div>
      <NavBar />
    </main>
  );
}

/* ---------- command line and status bar ---------- */

function CommandLine() {
  return (
    <section className="flex h-[56px] border-b-2 border-t-3 border-[#6b6b6b]">
      <div className="flex w-[22px] flex-none flex-col items-center bg-linear-to-b from-[#7c7c7c] to-[#3a3a3a] pt-[3px] text-white">
        <span className="h-[6px] w-[18px] bg-[radial-gradient(#bbb_1px,transparent_1px)] bg-size-[3px_3px]" />
        <button aria-label="Zavřít příkazový řádek" className="mt-[7px]">
          <svg width="10" height="10" viewBox="0 0 10 10" className="block" aria-hidden="true">
            <path d="M1 1l8 8M9 1L1 9" stroke="#fff" strokeWidth="2" />
          </svg>
        </button>
        <button aria-label="Přizpůsobit" className="mt-2.5">
          <Wrench size={14} fill="#fff" className="-scale-x-100" />
        </button>
      </div>
      <div className="flex flex-1 flex-col font-['DejaVu_Sans_Mono',monospace] text-xs">
        <p className="flex h-[29px] items-end border-b border-[#888] bg-[#c8c8c8] pb-px pl-[3px] leading-4 text-black">
          Příkaz:
        </p>
        <div className="flex flex-1 items-center bg-white pl-[6px]">
          <Icon w={16} h={15}>
            <path d="M.5.5h14v13H.5z" fill="#d7dde6" stroke="#97a1ae" />
            <path d="M3 4l3.500 3L3 10M8 10.500h4" stroke="#333" strokeWidth="1.300" />
          </Icon>
          <svg width="5" height="3" viewBox="0 0 5 3" className="ml-0.5 flex-none" aria-hidden="true">
            <path d="M0 0h5L2.500 3z" fill="#777" />
          </svg>
          <input
            aria-label="Příkaz"
            placeholder="Zadejte příkaz"
            className="ml-2 h-full min-w-0 flex-1 bg-transparent italic outline-none placeholder:text-[#8f8f8f]"
          />
        </div>
      </div>
    </section>
  );
}

function Cell({ label, className, children }: { label: string; className: string; children: ReactNode }) {
  return (
    <button
      aria-label={label}
      className={`flex h-[26px] flex-none items-center justify-center border border-[#6f6f6f] bg-[#505050] ${className}`}
    >
      {children}
    </button>
  );
}

const glow = "#2a94ff";

function StatusBar() {
  return (
    <footer className="flex h-7 items-center justify-end bg-[#393939]">
      <div className="flex gap-px bg-[#5c5c5c]">
        <button className="h-[26px] w-14 border border-[#6f6f6f] bg-[#505050] text-xs leading-4 text-white">
          MODELP
        </button>
        <div className="flex h-[26px] w-[103px] items-center border border-[#6f6f6f] bg-[#505050] pl-[5px]">
          <button aria-label="Orto">
            <Icon w={16}>
              <path d="M1.500 3v12.500H14M1.500 11.500h4v4" />
            </Icon>
          </button>
          <button aria-label="Polární" className="ml-[7px] flex items-center gap-1.5">
            <Icon>
              <circle cx="8" cy="9" r="6.500" stroke={glow} strokeWidth="1.500" />
              <path d="M8 9.500h8M8 9l5-5" stroke={glow} strokeWidth="1.500" />
            </Icon>
            <Caret big />
          </button>
          <button aria-label="Izometrické" className="ml-2 flex items-center gap-1.5">
            <Icon>
              <path d="M9.500 0v18" stroke="#9f9f9f" />
              <path d="M1 1l16 16" stroke="#9f9f9f" strokeWidth="1.300" />
              <circle cx="9.500" cy="9.500" r="1.500" fill="#ccc" stroke="none" />
            </Icon>
            <Caret big />
          </button>
        </div>
        <div className="flex h-[26px] w-16 items-center border border-[#6f6f6f] bg-[#505050] pl-[3px]">
          <button aria-label="Trasování">
            <Icon>
              <path d="M17 15.500H1.500L14 3" stroke={glow} strokeWidth="1.500" />
              <circle cx="7.500" cy="9.500" r="2" fill={glow} stroke="none" />
            </Icon>
          </button>
          <button aria-label="Uchopení" className="ml-[7px] flex items-center gap-[7px]">
            <Icon>
              <path d="M3.500 3.500h12v12h-12z" stroke={glow} strokeWidth="1.500" />
              <path d="M1.500 1.500h4v4h-4z" fill="#0f0" stroke="#063" />
            </Icon>
            <Caret big />
          </button>
        </div>
        <Cell label="Nastavení" className="w-[39px] gap-2.5">
          <Icon w={14} h={14}>
            <circle cx="7" cy="7" r="3.500" stroke="#cfcfcf" strokeWidth="3.500" />
            <circle cx="7" cy="7" r="5.500" stroke="#cfcfcf" strokeWidth="2" strokeDasharray="2.200 2.100" />
          </Icon>
          <Caret big />
        </Cell>
        <Cell label="Měřítko" className="w-[25px]">
          <Icon w={14} h={14}>
            <path d="M7 0v14M0 7h14" strokeWidth="2" />
          </Icon>
        </Cell>
        <Cell label="Zámek" className="w-10 gap-2">
          <Icon>
            <path d="M8 13.500H2.500v-11h13V7M3 4.500h12" strokeWidth="1.300" />
            <path d="M8 10h7v6H8z" fill="#ddd" stroke="none" />
            <path d="M12.500 10V8q0-1.500 2-1.500T16.500 9" />
          </Icon>
          <Caret big />
        </Cell>
        <Cell label="Izolovat" className="w-[26px]">
          <Icon w={15} h={15}>
            <path d="M0 1h7v7H0z" fill="#ddd" stroke="none" />
            <path d="M0 8h7v7H0zM8 8h7v7H8z" fill="#a5a5a5" stroke="none" />
          </Icon>
        </Cell>
        <Cell label="Objekty" className="w-[26px]">
          <Icon w={16} h={16}>
            <path d="M1.500 1.500h5v5h-5zM6.500 9.500l3.500 5H3z" strokeWidth="1.300" />
            <circle cx="12" cy="7" r="3" strokeWidth="1.300" />
          </Icon>
        </Cell>
        <Cell label="Výkon" className="w-[26px]">
          <Icon>
            <circle cx="9" cy="9" r="7.500" fill="#1468b8" stroke="#1f8cff" strokeWidth="1.500" />
            <path d="M9 11l4-4" stroke="#7cc4ff" strokeWidth="1.500" />
          </Icon>
        </Cell>
        <Cell label="Mechanical" className="w-[25px]">
          <Icon w={16} h={16}>
            <path d="M1.500 1.500h7l3 3v4h-10z" fill="#e7eef8" stroke="#35577f" />
            <path d="M1 8h11v5H1z" fill="#f5cf3c" stroke="none" />
            <path d="M4 4v6M7 4l4 2" stroke="#35577f" strokeWidth="1.500" />
            <path d="M7 11l3 3 5-7" stroke="#55c021" strokeWidth="2" />
          </Icon>
        </Cell>
        <Cell label="Přizpůsobení" className="w-[26px]">
          <Icon w={15} h={14}>
            <path d="M0 2h15M0 7h15M0 12h15" strokeWidth="1.500" />
          </Icon>
        </Cell>
      </div>
    </footer>
  );
}

export default function App() {
  return (
    <div className="relative flex h-screen flex-col border border-[#2b2b2b] bg-[#6b6b6b] font-['Open_Sans',sans-serif]">
      <Logo />
      <TitleBar />
      <div className="mx-[3px] mb-[3px] flex min-h-0 flex-1 flex-col">
        <RibbonTabs />
        <Ribbon />
        <DocTabs />
        <Canvas />
        <CommandLine />
        <StatusBar />
      </div>
    </div>
  );
}
